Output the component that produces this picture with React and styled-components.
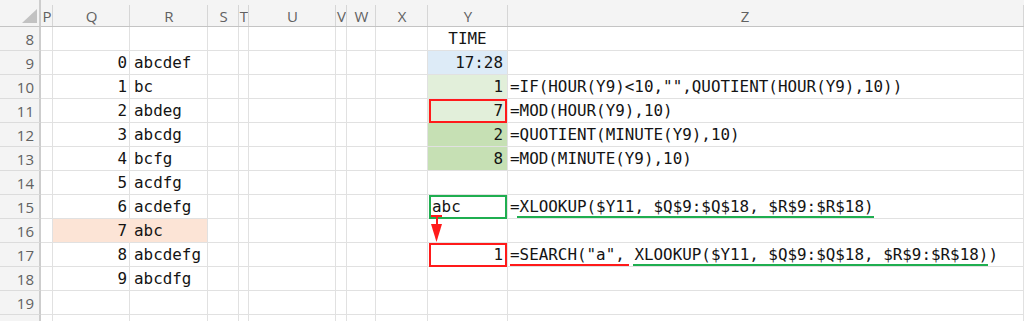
import React from 'react'
import styled, { createGlobalStyle } from 'styled-components'

const GRID = '#e1e1e1'
const RED = '#ff1a1a'
const GREEN = '#1fae50'

const columns = [
  { name: 'P', width: 12 },
  { name: 'Q', width: 77 },
  { name: 'R', width: 78 },
  { name: 'S', width: 31 },
  { name: 'T', width: 10 },
  { name: 'U', width: 87 },
  { name: 'V', width: 11 },
  { name: 'W', width: 29 },
  { name: 'X', width: 52 },
  { name: 'Y', width: 80 },
  { name: 'Z', width: 516 },
]

const fills = {
  blue: '#ddebf7',
  mint: '#e2efda',
  green: '#c6e0b4',
  peach: '#fce4d6',
}

const GlobalStyle = createGlobalStyle`
  html, body {
    margin: 0;
    padding: 0;
    background: #ffffff;
    overflow: hidden;
  }
`

const Sheet = styled.div`
  display: grid;
  grid-template-columns: 41px ${columns.map((c) => `${c.width}px`).join(' ')};
  grid-template-rows: 27px;
  grid-auto-rows: 24px;
  width: 1024px;
  height: 321px;
  overflow: hidden;
  background: #ffffff;
  font-family: 'DejaVu Sans Mono', 'Liberation Mono', monospace;
  font-size: 15.9px;
  color: #141414;
`

const Corner = styled.div`
  position: relative;
  background: #f4f4f4;
  border-right: 2px solid #cdcdcd;
  border-bottom: 1px solid #c4c4c4;
  box-sizing: border-box;
`

const CornerMark = styled.svg`
  position: absolute;
  left: 22px;
  top: 9px;
`

const ColHead = styled.div`
  position: relative;
  box-sizing: border-box;
  display: flex;
  align-items: center;
  justify-content: center;
  padding: 5px ${({ $shift }) => $shift || 0}px 0 0;
  background: #f4f4f4;
  border-bottom: 1px solid #c4c4c4;
  font-family: 'Open Sans', 'Noto Sans', sans-serif;
  font-size: 15px;
  color: #616161;
  overflow: hidden;

  &::after {
    content: '';
    position: absolute;
    right: 0;
    top: 5px;
    bottom: 0;
    width: 1px;
    background: #d6d6d6;
  }
`

const RowHead = styled.div`
  box-sizing: border-box;
  display: flex;
  align-items: center;
  justify-content: flex-end;
  padding-right: 5px;
  background: #f4f4f4;
  border-right: 2px solid #cdcdcd;
  border-bottom: 1px solid #dcdcdc;
  font-family: 'Open Sans', 'Noto Sans', sans-serif;
  font-size: 15px;
  color: #616161;
`

const Cell = styled.div`
  position: relative;
  box-sizing: border-box;
  display: flex;
  align-items: center;
  justify-content: ${({ $align }) =>
    $align === 'right' ? 'flex-end' : $align === 'center' ? 'center' : 'flex-start'};
  padding: 0 ${({ $pr }) => $pr ?? 4}px 0 ${({ $pl }) => $pl ?? 4}px;
  background: ${({ $fill }) => ($fill ? fills[$fill] : 'transparent')};
  border-right: 1px solid ${({ $fill, $joinRight }) =>
    $fill && $joinRight ? fills[$fill] : GRID};
  border-bottom: 1px solid ${GRID};
  white-space: nowrap;
  overflow: visible;

  &::after {
    content: '';
    display: ${({ $frame }) => ($frame ? 'block' : 'none')};
    position: absolute;
    left: 1px;
    top: 0;
    right: 0;
    bottom: -1px;
    border: 2px solid ${({ $frame }) => $frame || 'transparent'};
    pointer-events: none;
  }
`

const Formula = styled.div`
  display: flex;
  align-items: center;
  align-self: stretch;
  white-space: pre;
`

const Mark = styled.span`
  position: relative;
  display: flex;
  align-items: center;

  &::after {
    content: '';
    position: absolute;
    left: ${({ $l }) => $l ?? 0}px;
    right: ${({ $r }) => $r ?? 0}px;
    bottom: -2px;
    height: 2px;
    background: ${({ $color }) => $color};
  }
`

const Arrow = styled.svg`
  position: absolute;
  left: 1px;
  top: 20px;
  z-index: 2;
  overflow: visible;
`

const lookup = [
  'abcdef',
  'bc',
  'abdeg',
  'abcdg',
  'bcfg',
  'acdfg',
  'acdefg',
  'abc',
  'abcdefg',
  'abcdfg',
]

const yCells = {
  8: { text: 'TIME', align: 'center' },
  9: { text: '17:28', align: 'right', fill: 'blue' },
  10: { text: '1', align: 'right', fill: 'mint' },
  11: { text: '7', align: 'right', fill: 'mint', frame: RED },
  12: { text: '2', align: 'right', fill: 'green' },
  13: { text: '8', align: 'right', fill: 'green' },
  15: { text: 'abc', align: 'left', frame: GREEN, arrow: true },
  17: { text: '1', align: 'right', frame: RED },
}

const zCells = {
  10: '=IF(HOUR(Y9)<10,"",QUOTIENT(HOUR(Y9),10))',
  11: '=MOD(HOUR(Y9),10)',
  12: '=QUOTIENT(MINUTE(Y9),10)',
  13: '=MOD(MINUTE(Y9),10)',
  15: (
    <Formula>
      =<Mark $color={GREEN} $l={-3}>XLOOKUP($Y11, $Q$9:$Q$18, $R$9:$R$18)</Mark>
    </Formula>
  ),
  17: (
    <Formula>
      <Mark $color={RED} $r={-4}>=SEARCH("a",</Mark>
      <span>{'\u00a0'}</span>
      <Mark $color={GREEN} $l={-1}>XLOOKUP($Y11, $Q$9:$Q$18, $R$9:$R$18)</Mark>
      <span>)</span>
    </Formula>
  ),
}

// red "feeds into" arrow from Y15 down to Y17
const LinkArrow = () => (
  <Arrow width="16" height="30" viewBox="0 0 16 30">
    <rect x="2" y="0" width="11" height="2" fill={RED} />
    <rect x="7" y="1" width="2" height="10" fill={RED} />
    <polygon points="2,9 13,9 7.5,27" fill={RED} />
  </Arrow>
)

const Row = ({ n }) => {
  const idx = n - 9
  const hasData = idx >= 0 && idx < lookup.length
  const highlight = n === 16 ? 'peach' : undefined
  const y = yCells[n]
  return (
    <>
      <RowHead>{n <= 19 ? n : ''}</RowHead>
      <Cell />
      <Cell $align="right" $pr={2} $fill={highlight} $joinRight>
        {hasData ? idx : ''}
      </Cell>
      <Cell $fill={highlight}>{hasData ? lookup[idx] : ''}</Cell>
      <Cell />
      <Cell />
      <Cell />
      <Cell />
      <Cell />
      <Cell />
      <Cell
        $align={y?.align}
        $fill={y?.fill}
        $frame={y?.frame}
        $pr={4}
        $pl={4}
      >
        {y?.text}
        {y?.arrow && <LinkArrow />}
      </Cell>
      <Cell $pl={2}>{zCells[n]}</Cell>
    </>
  )
}

const rows = Array.from({ length: 13 }, (_, i) => i + 8)

export default function App() {
  return (
    <>
      <GlobalStyle />
      <Sheet>
        <Corner>
          <CornerMark width="16" height="15" viewBox="0 0 16 15">
            <polygon points="15,0 15,14 0,14" fill="#c2c2c2" />
          </CornerMark>
        </Corner>
        {columns.map((c) => (
          <ColHead key={c.name} $shift={c.name === 'Z' ? 42 : 0}>
            {c.name}
          </ColHead>
        ))}
        {rows.map((n) => (
          <Row key={n} n={n} />
        ))}
      </Sheet>
    </>
  )
}
